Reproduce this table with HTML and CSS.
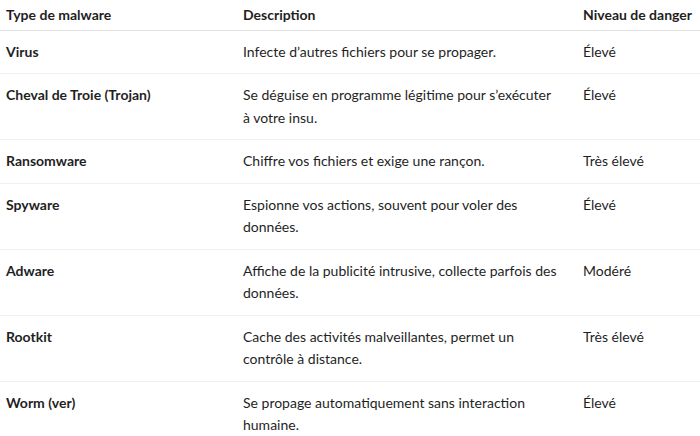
FILE: index.html
```html
<!DOCTYPE html>
<html lang="fr">
<head>
<meta charset="utf-8">
<link rel="stylesheet" href="styles.css">
</head>
<body>
<table class="malware-table">
  <colgroup>
    <col class="c1">
    <col class="c2">
    <col class="c3">
  </colgroup>
  <thead>
    <tr><th>Type de malware</th><th>Description</th><th>Niveau de danger</th></tr>
  </thead>
  <tbody>
    <tr><td class="name">Virus</td><td>Infecte d’autres fichiers pour se propager.</td><td>Élevé</td></tr>
    <tr><td class="name">Cheval de Troie (Trojan)</td><td>Se déguise en programme légitime pour s’exécuter à votre insu.</td><td>Élevé</td></tr>
    <tr><td class="name">Ransomware</td><td>Chiffre vos fichiers et exige une rançon.</td><td>Très élevé</td></tr>
    <tr><td class="name">Spyware</td><td>Espionne vos actions, souvent pour voler des données.</td><td>Élevé</td></tr>
    <tr><td class="name">Adware</td><td>Affiche de la publicité intrusive, collecte parfois des données.</td><td>Modéré</td></tr>
    <tr><td class="name">Rootkit</td><td>Cache des activités malveillantes, permet un contrôle à distance.</td><td>Très élevé</td></tr>
    <tr><td class="name">Worm (ver)</td><td>Se propage automatiquement sans interaction humaine.</td><td>Élevé</td></tr>
  </tbody>
</table>
</body>
</html>
```
FILE: styles.css
```css
html, body {
  margin: 0;
  padding: 0;
  background: #ffffff;
}
body {
  font-family: "Lato", "Open Sans", sans-serif;
  font-size: 14px;
  line-height: 22.5px;
  color: #1f1f1f;
}
.malware-table {
  width: 700px;
  border-collapse: collapse;
  table-layout: fixed;
}
.c1 { width: 237px; }
.c2 { width: 340px; }
.c3 { width: 123px; }
.malware-table th {
  text-align: left;
  font-weight: 700;
  padding: 4px 16px 3px 6px;
  border-bottom: 1px solid #e3e3e3;
}
.malware-table td {
  vertical-align: top;
  padding: 10px 16px 10px 6px;
  border-bottom: 1px solid #efefef;
}
.malware-table th:last-child,
.malware-table td:last-child {
  padding-right: 0;
}
.malware-table tbody tr:last-child td {
  border-bottom: none;
}
.malware-table td.name {
  font-weight: 700;
}
```
